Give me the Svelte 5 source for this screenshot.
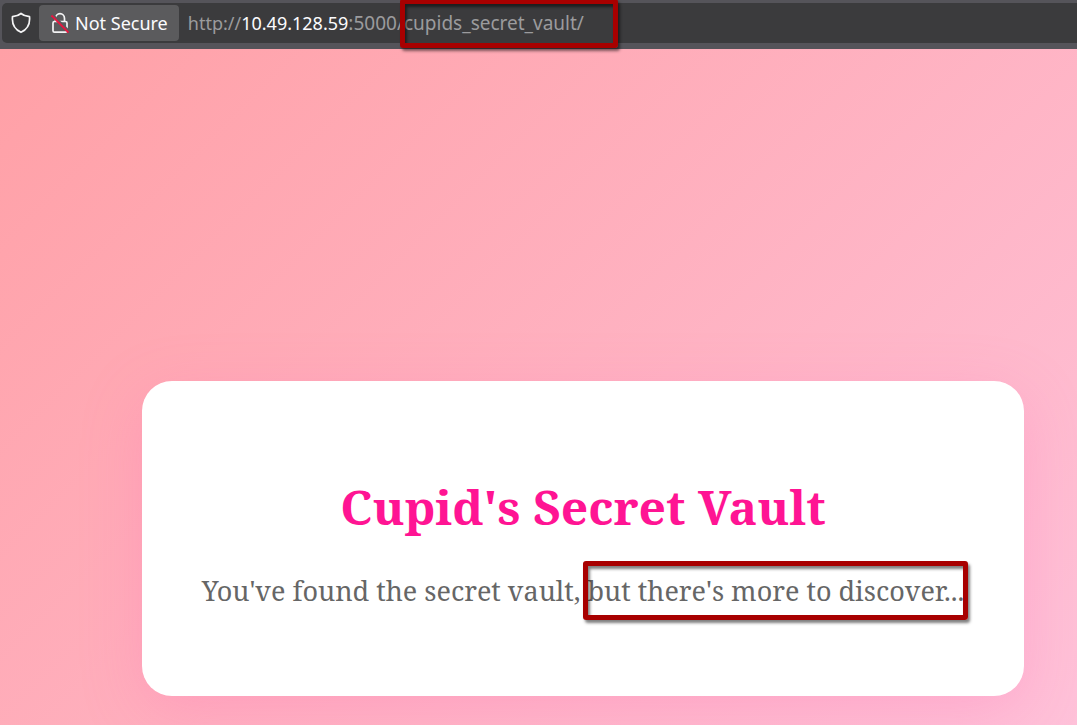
<script lang="ts">
	// The address is split up so that the host can be drawn brighter.
	const address = {
		scheme: 'http://',
		host: '10.49.128.59',
		port: ':5000/',
		path: 'cupids_secret_vault/'
	};
</script>

<div class="browser">
	<header class="toolbar">
		<div class="url-bar">
			<button type="button" class="shield" aria-label="Tracking protection">
				<svg viewBox="0 0 20 22" width="20" height="22" fill="none">
					<path
						d="M10 1.5C8 3.2 5 4.3 1.5 4.7C.8 11.5 3.5 17.2 10 20.3C16.5 17.2 19.2 11.5 18.5 4.7C15 4.3 12 3.2 10 1.5Z"
						stroke="#f4f4f5"
						stroke-width="1.7"
						stroke-linejoin="round"
					/>
				</svg>
			</button>
			<button type="button" class="security">
				<svg viewBox="0 0 18 22" width="18" height="22" fill="none">
					<path
						d="M4.5 9.5V6.5a4.5 4.8 0 0 1 9 0v3M3.5 9.5h11a1.5 1.5 0 0 1 1.5 1.5v7.7a1.5 1.5 0 0 1-1.5 1.5h-11a1.5 1.5 0 0 1-1.5-1.5V11a1.5 1.5 0 0 1 1.5-1.5Z"
						stroke="#f4f4f5"
						stroke-width="1.7"
					/>
					<path d="M1 2.5 18 19.5" stroke="#5b5b5d" stroke-width="3" />
					<path d="M.5 3.5 17.5 20.5" stroke="#e9153f" stroke-width="1.8" />
				</svg>
				<span>Not Secure</span>
			</button>
			<div class="address" role="textbox" tabindex="0" contenteditable="true" aria-label="Address">
				<span>{address.scheme}</span><span class="host">{address.host}</span><span class="rest">{address.port}</span><span class="rest marked path">{address.path}</span>
			</div>
		</div>
	</header>

	<main>
		<section class="card">
			<h1>Cupid's Secret Vault</h1>
			<p>You've found the secret vault, <span class="marked hint">but there's more to discover...</span></p>
		</section>
	</main>
</div>

<style>
	:global(body) {
		margin: 0;
	}

	.browser {
		display: flex;
		flex-direction: column;
		min-height: 100vh;
		overflow: hidden;
	}

	.toolbar {
		position: relative;
		z-index: 1;
		padding: 3px 0 6px 2px;
		background: #55545a;
	}

	.url-bar {
		display: flex;
		align-items: center;
		height: 40px;
		border-radius: 5px 0 0 5px;
		background: #3b3b3d;
		color: #9b9b9d;
		font: 18px/28px 'Noto Sans', sans-serif;
	}

	button {
		padding: 0;
		border: 0;
		background: none;
		color: #fbfbfe;
		font: inherit;
	}

	.shield {
		display: flex;
		justify-content: center;
		width: 37px;
	}

	.security {
		display: flex;
		align-items: center;
		gap: 6px;
		height: 36px;
		padding: 0 11px 0 12px;
		border-radius: 4px;
		background: #5b5b5d;
		white-space: nowrap;
	}

	.address {
		margin-left: 9px;
		outline: none;
		white-space: nowrap;
	}

	.host {
		color: #fbfbfe;
	}

	.rest {
		font-size: 19px;
	}

	main {
		display: flex;
		flex: 1;
		align-items: flex-end;
		justify-content: center;
		padding: 64px 0 29px 89px;
		background: linear-gradient(135deg, #ffa0a6 0%, #fecae6 125%);
	}

	.card {
		padding: 90px 60px 84px;
		border-radius: 30px;
		background: #fff;
		box-shadow: 0 15px 60px rgba(255, 105, 180, 0.25);
		font-family: 'Noto Serif', 'DejaVu Serif', serif;
		text-align: center;
	}

	h1 {
		margin: 0 0 26px;
		color: #ff1493;
		font-size: 48px;
		line-height: 72px;
	}

	p {
		margin: 0;
		color: #666;
		font-size: 27px;
		line-height: 43px;
	}

	/* Red frame drawn over the parts worth noticing */
	.marked {
		position: relative;
	}

	.marked::after {
		position: absolute;
		border: 5px solid #a80000;
		border-radius: 3px;
		box-shadow:
			2px 3px 3px rgba(0, 0, 0, 0.5),
			inset 2px 3px 3px rgba(0, 0, 0, 0.5);
		content: '';
		pointer-events: none;
	}

	.path::after {
		inset: -11px -34px -12px -4px;
	}

	.hint::after {
		inset: -11px -4px;
	}
</style>
